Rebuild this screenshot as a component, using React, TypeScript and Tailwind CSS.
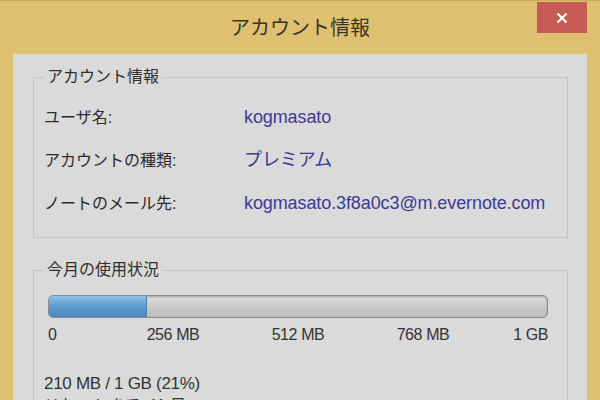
import React from 'react'

const jp = { fontFamily: '"Liberation Sans", "Noto Sans CJK JP", sans-serif' }

const rows = [
    { label: 'ユーザ名:', value: 'kogmasato' },
    { label: 'アカウントの種類:', value: 'プレミアム' },
    { label: 'ノートのメール先:', value: 'kogmasato.3f8a0c3@m.evernote.com' },
]

const ticks = [
    { text: '0', pos: 'left-0' },
    { text: '256 MB', pos: 'left-1/4 -translate-x-1/2' },
    { text: '512 MB', pos: 'left-1/2 -translate-x-1/2' },
    { text: '768 MB', pos: 'left-3/4 -translate-x-1/2' },
    { text: '1 GB', pos: 'right-0' },
]

export default function App() {
    return (
        <div className="w-[600px] h-[400px] overflow-hidden bg-[#dfc071] border-t border-[#c9a95a] flex flex-col" style={jp}>
            {/* Title bar */}
            <div className="relative h-[53px] shrink-0 flex items-start justify-center">
                <span className="mt-[13px] text-[20px] leading-[28px] text-[#37342c]">アカウント情報</span>
                <button className="absolute right-[13px] top-[1px] w-[50px] h-[31px] bg-[#c75b55] flex items-center justify-center text-white">
                    <svg width="12" height="12" viewBox="0 0 12 12">
                        <path d="M1.5 1.5L10.5 10.5M10.5 1.5L1.5 10.5" stroke="white" strokeWidth="2.2" />
                    </svg>
                </button>
            </div>

            {/* Content */}
            <div className="flex-1 mx-[13px] bg-[#dadada] pl-[20px] pr-[19px] pt-[11px] flex flex-col gap-[20px]">
                <fieldset className="border border-[#c4c4c4] pl-[10px] pr-3 pb-[12px] min-w-0">
                    <legend className="px-[3px] text-[16px] leading-[24px] text-[#2e2e2e]">アカウント情報</legend>
                    <div className="pt-[7px] flex flex-col">
                        {rows.map((r) => (
                            <div key={r.label} className="h-[43px] flex items-center">
                                <span className="w-[200px] text-[16px] text-[#2a2a2a]">{r.label}</span>
                                <span className="text-[18px] tracking-[-0.1px] text-[#3a3a98]">{r.value}</span>
                            </div>
                        ))}
                    </div>
                </fieldset>

                <fieldset className="border border-[#c4c4c4] pl-[10px] pr-[19px] min-w-0">
                    <legend className="px-[3px] text-[16px] leading-[24px] text-[#2e2e2e]">今月の使用状況</legend>
                    <div className="mt-[13px] ml-[4px] h-[23px] rounded-[5px] border border-[#8c8c8c] bg-gradient-to-b from-[#dedede] via-[#c9c9c9] to-[#bdbdbd] shadow-[inset_0_1px_2px_rgba(0,0,0,0.25)] overflow-hidden">
                        <div className="h-full w-[19.6%] rounded-l-[4px] border-r border-[#4d7ea8] bg-gradient-to-b from-[#8dc0e6] via-[#5b9bd0] to-[#4a88bd]" />
                    </div>
                    <div className="relative mt-[6px] ml-[4px] h-[22px] text-[16px] leading-[22px] text-[#333] tracking-[-0.4px]">
                        {ticks.map((t) => (
                            <span key={t.text} className={`absolute top-0 ${t.pos}`}>{t.text}</span>
                        ))}
                    </div>
                    <div className="mt-[27px] text-[17px] leading-[22px] text-[#333] tracking-[-0.3px]">210 MB / 1 GB (21%)</div>
                    <div className="text-[16px] leading-[22px] text-[#333]">リセットまで: 11 日</div>
                </fieldset>
            </div>
        </div>
    )
}
